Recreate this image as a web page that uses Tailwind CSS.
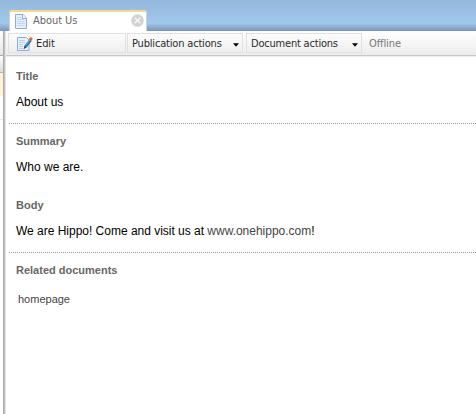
<!DOCTYPE html>
<html lang="en">
<head>
<meta charset="utf-8">
<title>About Us</title>
<script src="https://cdn.jsdelivr.net/npm/@tailwindcss/browser@4"></script>
</head>
<body class="w-[476px] h-[414px] overflow-hidden bg-white flex flex-col font-['Liberation_Sans',Arial,sans-serif] text-[12px] leading-[14px] text-black">
<header class="h-[31px] shrink-0 pl-[9px] flex items-end bg-linear-to-b from-[#94b8db] from-0% via-[#a1c8eb] via-75% to-[#7896b7] to-100%">
  <div class="w-[138px] h-[21px] bg-white rounded-t-[3px] border-t-2 border-[#f3d98b] border-r border-r-[#c9d3dd] border-l border-l-[#c9d3dd] flex items-start pl-[5px] pr-[2px] font-['DejaVu_Sans_Condensed','DejaVu_Sans',sans-serif] text-[11px] text-[#666]">
    <svg class="mt-[2px] shrink-0" width="12" height="15" viewBox="0 0 12 15">
      <path d="M.5.5h7.500l3.500 3.500v10.500H.5z" fill="#e6f0fb" stroke="#93abd0"/>
      <path d="M7.500.5v4h4" fill="#f8fbff" stroke="#93abd0"/>
      <path d="M2 3.500h4M2 5.500h7M2 7.500h8M2 9.500h8M2 11.500h8" stroke="#c3d6ef"/>
    </svg>
    <span class="ml-[6px] mt-[2px] tracking-[-0.05px] whitespace-nowrap">About Us</span>
    <svg class="ml-auto mt-[2px] shrink-0" width="13" height="13" viewBox="0 0 13 13">
      <circle cx="6.500" cy="6.500" r="6.300" fill="#d2d3d3"/>
      <path d="M3.800 3.800l5.400 5.400M9.200 3.800L3.800 9.200" stroke="#fff" stroke-width="1.200"/>
    </svg>
  </div>
</header>
<div class="flex flex-1 min-h-0">
  <aside class="w-[3px] shrink-0 flex flex-col">
    <div class="h-[25px] bg-linear-to-b from-white to-[#e6e6e6] border-b border-[#aaa]"></div>
    <div class="h-[17px] bg-linear-to-b from-white to-[#dcdcdc] border-b border-[#b5b5b5]"></div>
    <div class="h-[23px] bg-[#fff3d3]"></div>
    <div class="h-[24px] border-b border-[#e8e8e8]"></div>
  </aside>
  <div class="w-[3px] shrink-0 bg-linear-to-r from-[#aaa] from-35% via-[#c4c4c4] via-50% to-[#f0f0f0]"></div>
  <main class="flex-1 min-w-0">
    <div class="h-[25px] pt-[2px] pl-[2px] flex items-start bg-linear-to-b from-white to-[#ececec] border-b border-[#c8c8c8] font-['DejaVu_Sans_Condensed','DejaVu_Sans',sans-serif] text-[11px] text-[#2b2b2b] whitespace-nowrap">
      <div class="w-[118px] h-[20px] border border-[#e0e0e0] flex items-center pl-[8px]">
        <svg class="shrink-0 mt-px" width="16" height="16" viewBox="0 0 16 16">
          <path d="M.5 1.500h9l2.500 2.500v10.500H.5z" fill="#e8f1fb" stroke="#93abd0"/>
          <path d="M2 4.500h6M2 6.500h6M2 8.500h4M2 10.500h4M2 12.500h4" stroke="#bccfe9"/>
          <path d="M7 12.800l.8-3.600 4.700-6 2.300 1.800-4.800 6z" fill="#2479ac"/>
          <path d="M8.500 9.500l4.500-5.500" stroke="#69b4d9"/>
          <path d="M6.500 13.200l1.200-3.500 2 1.600z" fill="#344b60"/>
          <circle cx="13.800" cy="2.900" r="1.700" fill="#e5603b"/>
        </svg>
        <span class="ml-[3px] mt-[2px] tracking-[-0.1px]">Edit</span>
      </div>
      <div class="ml-px w-[116px] h-[20px] border border-[#e0e0e0] flex items-center pl-[4px] pr-[3px]">
        <span class="mt-[2px] tracking-[-0.18px]">Publication actions</span>
        <svg class="ml-auto mt-[3px]" width="6" height="4" viewBox="0 0 6 4"><path d="M0 .3h6L3 3.700z" fill="#000"/></svg>
      </div>
      <div class="ml-[3px] w-[116px] h-[20px] border border-[#e0e0e0] flex items-center pl-[4px] pr-[3px]">
        <span class="mt-[2px] tracking-[-0.2px]">Document actions</span>
        <svg class="ml-auto mt-[3px]" width="6" height="4" viewBox="0 0 6 4"><path d="M0 .3h6L3 3.700z" fill="#000"/></svg>
      </div>
      <div class="ml-[7px] mt-px h-[20px] flex items-center tracking-[-0.1px] text-[#777]">Offline</div>
    </div>
    <div class="pl-[3px] border-t border-[#eee]">
      <section class="h-[67px] pl-[7px] pt-[12px] border-b border-dotted border-[#999]">
        <h2 class="text-[11px] font-bold text-[#666]">Title</h2>
        <p class="mt-[12px]">About us</p>
      </section>
      <section class="h-[64px] pl-[7px] pt-[10px]">
        <h2 class="text-[11px] font-bold text-[#666]">Summary</h2>
        <p class="mt-[12px]">Who we are.</p>
      </section>
      <section class="h-[65px] pl-[7px] pt-[10px] border-b border-dotted border-[#999]">
        <h2 class="text-[11px] font-bold text-[#666]">Body</h2>
        <p class="mt-[12px] whitespace-nowrap tracking-[-0.015px]">We are Hippo! Come and visit us at <a class="text-[#444]">www.onehippo.com</a>!</p>
      </section>
      <section class="pl-[7px] pt-[10px]">
        <h2 class="text-[11px] font-bold text-[#666]">Related documents</h2>
        <p class="mt-[15px] pl-[2px] text-[11px] text-[#444]">homepage</p>
      </section>
    </div>
  </main>
</div>
</body>
</html>
